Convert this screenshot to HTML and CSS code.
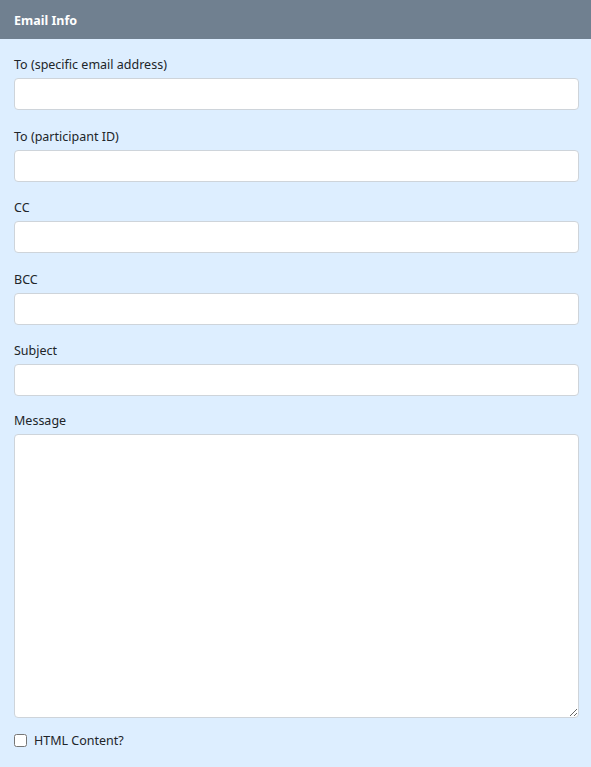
FILE: index.html
```html
<!DOCTYPE html>
<html lang="en">
<head>
  <meta charset="UTF-8">
  <title>Email Info</title>
  <link rel="stylesheet" href="styles.css">
</head>
<body>
  <div class="panel">
    <div class="panel-head">Email Info</div>
    <form class="panel-body">
      <div class="form-group">
        <label for="toEmail">To (specific email address)</label>
        <input type="text" id="toEmail">
      </div>
      <div class="form-group">
        <label for="toId">To (participant ID)</label>
        <input type="text" id="toId">
      </div>
      <div class="form-group">
        <label for="cc">CC</label>
        <input type="text" id="cc">
      </div>
      <div class="form-group">
        <label for="bcc">BCC</label>
        <input type="text" id="bcc">
      </div>
      <div class="form-group subject">
        <label for="subject">Subject</label>
        <input type="text" id="subject">
      </div>
      <div class="form-group">
        <label for="message">Message</label>
        <textarea id="message"></textarea>
      </div>
      <div class="check">
        <input type="checkbox" id="isHtml">
        <label for="isHtml">HTML Content?</label>
      </div>
    </form>
  </div>
</body>
</html>
```

FILE: styles.css
```css
body {
  margin: 0;
  font-family: 'Noto Sans', 'Open Sans', sans-serif;
  font-size: 12.5px;
  color: #212529;
  background-color: #ddeeff;
}
.panel-head {
  background-color: #708090;
  color: white;
  font-weight: bold;
  height: 39px;
  line-height: 41px;
  padding: 0 14px;
}
.panel-body {
  padding: 17px 12px 0 14px;
}
.form-group {
  margin-bottom: 17.5px;
}
.form-group.subject {
  margin-bottom: 16px;
}
label {
  display: block;
  line-height: 18px;
  margin-bottom: 4px;
}
input[type="text"], textarea {
  display: block;
  box-sizing: border-box;
  width: 100%;
  height: 32px;
  border: 1px solid #ced4da;
  border-radius: 4px;
  background: white;
  font: inherit;
  padding: 4px 8px;
}
textarea {
  height: 284px;
  resize: vertical;
}
.check {
  display: flex;
  align-items: center;
  gap: 7px;
  margin-top: -4px;
}
.check input {
  margin: 0;
  width: 13px;
  height: 13px;
}
.check label {
  display: inline;
  margin: 0;
}
```
